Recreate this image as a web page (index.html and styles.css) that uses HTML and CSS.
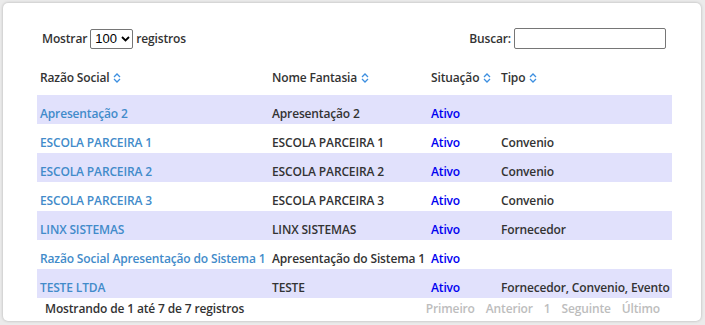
FILE: index.html
```html
<!DOCTYPE html>
<html lang="pt-BR">
<head>
<meta charset="utf-8">
<title>Parceiros</title>
<link rel="stylesheet" href="styles.css">
</head>
<body>
<div class="card">
  <div class="controls">
    <label class="length">Mostrar
      <span class="select">100 <svg class="chev" width="9" height="6" viewBox="0 0 9 6"><path d="M1 1l3.5 3.5L8 1" fill="none" stroke="#000" stroke-width="1.8"/></svg></span>
      registros</label>
    <label class="search">Buscar: <span class="input"></span></label>
  </div>
  <table class="grid">
    <colgroup>
      <col class="c1"><col class="c2"><col class="c3"><col class="c4">
    </colgroup>
    <thead>
      <tr>
        <th>Razão Social <svg class="sort" width="8" height="10" viewBox="0 0 8 10"><path d="M1 4l3-3 3 3M1 6l3 3 3-3" fill="none" stroke="#3d8fe0" stroke-width="1.3"/></svg></th>
        <th>Nome Fantasia <svg class="sort" width="8" height="10" viewBox="0 0 8 10"><path d="M1 4l3-3 3 3M1 6l3 3 3-3" fill="none" stroke="#3d8fe0" stroke-width="1.3"/></svg></th>
        <th>Situação <svg class="sort" width="8" height="10" viewBox="0 0 8 10"><path d="M1 4l3-3 3 3M1 6l3 3 3-3" fill="none" stroke="#3d8fe0" stroke-width="1.3"/></svg></th>
        <th>Tipo <svg class="sort" width="8" height="10" viewBox="0 0 8 10"><path d="M1 4l3-3 3 3M1 6l3 3 3-3" fill="none" stroke="#3d8fe0" stroke-width="1.3"/></svg></th>
      </tr>
    </thead>
    <tbody>
      <tr class="odd"><td><a href="#">Apresentação 2</a></td><td>Apresentação 2</td><td class="st">Ativo</td><td></td></tr>
      <tr><td><a href="#">ESCOLA PARCEIRA 1</a></td><td>ESCOLA PARCEIRA 1</td><td class="st">Ativo</td><td>Convenio</td></tr>
      <tr class="odd"><td><a href="#">ESCOLA PARCEIRA 2</a></td><td>ESCOLA PARCEIRA 2</td><td class="st">Ativo</td><td>Convenio</td></tr>
      <tr><td><a href="#">ESCOLA PARCEIRA 3</a></td><td>ESCOLA PARCEIRA 3</td><td class="st">Ativo</td><td>Convenio</td></tr>
      <tr class="odd"><td><a href="#">LINX SISTEMAS</a></td><td>LINX SISTEMAS</td><td class="st">Ativo</td><td>Fornecedor</td></tr>
      <tr><td><a href="#">Razão Social Apresentação do Sistema 1</a></td><td>Apresentação do Sistema 1</td><td class="st">Ativo</td><td></td></tr>
      <tr class="odd"><td><a href="#">TESTE LTDA</a></td><td>TESTE</td><td class="st">Ativo</td><td>Fornecedor, Convenio, Evento</td></tr>
    </tbody>
  </table>
  <div class="footer">
    <div class="info">Mostrando de 1 até 7 de 7 registros</div>
    <div class="pager">
      <span>Primeiro</span><span>Anterior</span><span>1</span><span>Seguinte</span><span>Último</span>
    </div>
  </div>
</div>
</body>
</html>
```
FILE: styles.css
```css
html, body {
  margin: 0;
  padding: 0;
}
body {
  background: #ebebeb;
  font-family: "Open Sans", "Noto Sans", sans-serif;
  font-size: 12px;
  font-weight: 600;
  letter-spacing: -0.15px;
  color: #333;
  width: 705px;
  height: 325px;
  overflow: hidden;
}
.card {
  margin: 3px 4px 0 3px;
  height: 318px;
  box-sizing: border-box;
  background: #fff;
  border-radius: 5px;
  box-shadow: 0 0 3px rgba(0, 0, 0, 0.25);
  padding: 25px 29px 0 34px;
}
.controls {
  display: flex;
  justify-content: space-between;
  align-items: center;
  height: 21px;
  padding: 0 6px 0 5px;
}
.length, .search {
  display: flex;
  align-items: center;
  gap: 3px;
}
.select {
  display: inline-flex;
  align-items: center;
  gap: 4px;
  box-sizing: border-box;
  width: 43px;
  height: 20px;
  border: 1px solid #767676;
  border-radius: 2px;
  padding: 0 0 0 4px;
  font-family: "Liberation Sans", Arial, sans-serif;
  font-weight: 400;
  font-size: 13px;
  letter-spacing: 0;
  color: #000;
}
.input {
  display: inline-block;
  box-sizing: border-box;
  width: 152px;
  height: 21px;
  border: 1px solid #767676;
  border-radius: 2px;
}
.grid {
  margin-top: 12px;
  width: 635px;
  border-collapse: collapse;
  table-layout: fixed;
}
.c1 { width: 232px; }
.c2 { width: 159px; }
.c3 { width: 70px; }
.c4 { width: 174px; }
.grid th {
  text-align: left;
  font-weight: 600;
  padding: 10px 0 10px 3px;
  line-height: 14px;
  white-space: nowrap;
}
.grid td {
  padding: 12px 0 3px 3px;
  line-height: 14px;
  white-space: nowrap;
}
.sort {
  vertical-align: -1px;
  margin-left: 1px;
}
.odd td {
  background: #e1e1fc;
}
.grid a {
  color: #428bca;
  text-decoration: none;
}
.st {
  color: #0000f0;
}
.footer {
  display: flex;
  justify-content: space-between;
  align-items: center;
  margin-top: 4px;
  line-height: 14px;
  padding: 0 12px 0 8px;
}
.pager {
  display: flex;
  gap: 11px;
  color: #bdbdbd;
}
```
